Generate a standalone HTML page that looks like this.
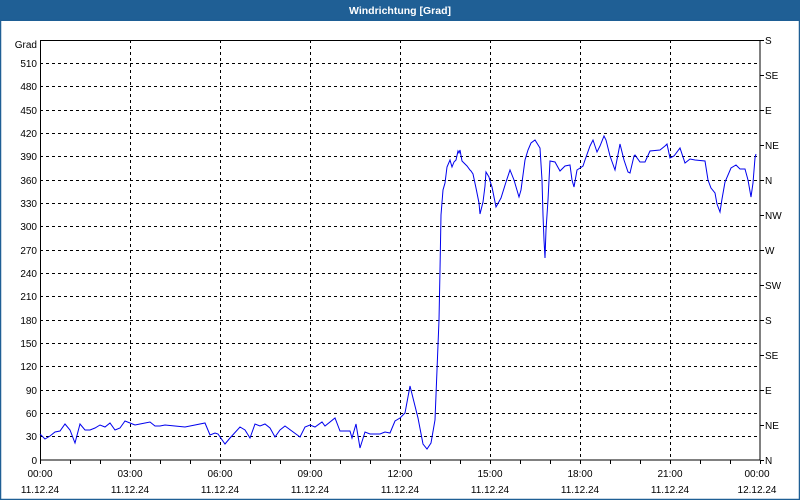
<!DOCTYPE html>
<html><head><meta charset="utf-8"><style>
html,body{margin:0;padding:0;width:800px;height:500px;overflow:hidden;background:#fff;font-family:"Liberation Sans",sans-serif}
</style></head><body>
<svg width="800" height="500" xmlns="http://www.w3.org/2000/svg" font-family="Liberation Sans, sans-serif" font-size="10">
<rect x="0" y="0" width="800" height="500" fill="#fff"/>
<rect x="0" y="0" width="800" height="21" fill="#1f5f95"/>
<rect x="0.5" y="20" width="799" height="479.5" fill="none" stroke="#1f5f95" stroke-width="1.5"/>
<text x="400" y="14" text-anchor="middle" fill="#fff" font-weight="bold" font-size="10.5">Windrichtung [Grad]</text>
<g stroke="#000" stroke-width="1" stroke-dasharray="3,3" fill="none">
<path d="M40 63.5H760M40 86.5H760M40 110.5H760M40 133.5H760M40 156.5H760M40 180.5H760M40 203.5H760M40 226.5H760M40 250.5H760M40 273.5H760M40 296.5H760M40 320.5H760M40 343.5H760M40 366.5H760M40 390.5H760M40 413.5H760M40 436.5H760"/>
<path d="M130.5 40V460M220.5 40V460M310.5 40V460M400.5 40V460M490.5 40V460M580.5 40V460M670.5 40V460"/>
</g>
<rect x="40.5" y="40.5" width="719.5" height="419.5" fill="none" stroke="#000"/>
<g stroke="#000"><path d="M40.5 460v4M70.5 460v4M100.5 460v4M130.5 460v4M160.5 460v4M190.5 460v4M220.5 460v4M250.5 460v4M280.5 460v4M310.5 460v4M340.5 460v4M370.5 460v4M400.5 460v4M430.5 460v4M460.5 460v4M490.5 460v4M520.5 460v4M550.5 460v4M580.5 460v4M610.5 460v4M640.5 460v4M670.5 460v4M700.5 460v4M730.5 460v4M760.5 460v4"/>
<path d="M760 40.5h4M760 75.5h4M760 110.5h4M760 145.5h4M760 180.5h4M760 215.5h4M760 250.5h4M760 285.5h4M760 320.5h4M760 355.5h4M760 390.5h4M760 425.5h4M760 460.5h4"/></g>
<g text-anchor="end">
<text x="37" y="48">Grad</text>
<text x="37" y="67">510</text><text x="37" y="90">480</text><text x="37" y="114">450</text><text x="37" y="137">420</text><text x="37" y="160">390</text><text x="37" y="184">360</text><text x="37" y="207">330</text><text x="37" y="230">300</text><text x="37" y="254">270</text><text x="37" y="277">240</text><text x="37" y="300">210</text><text x="37" y="324">180</text><text x="37" y="347">150</text><text x="37" y="370">120</text><text x="37" y="394">90</text><text x="37" y="417">60</text><text x="37" y="440">30</text><text x="37" y="464">0</text>
</g>
<g>
<text x="765" y="44">S</text><text x="765" y="79">SE</text><text x="765" y="114">E</text><text x="765" y="149">NE</text><text x="765" y="184">N</text><text x="765" y="219">NW</text><text x="765" y="254">W</text><text x="765" y="289">SW</text><text x="765" y="324">S</text><text x="765" y="359">SE</text><text x="765" y="394">E</text><text x="765" y="429">NE</text><text x="765" y="464">N</text>
</g>
<g text-anchor="middle">
<text x="40" y="477">00:00</text><text x="130" y="477">03:00</text><text x="220" y="477">06:00</text><text x="310" y="477">09:00</text><text x="400" y="477">12:00</text><text x="490" y="477">15:00</text><text x="580" y="477">18:00</text><text x="670" y="477">21:00</text><text x="757" y="477">00:00</text>
<text x="40" y="493">11.12.24</text><text x="130" y="493">11.12.24</text><text x="220" y="493">11.12.24</text><text x="310" y="493">11.12.24</text><text x="400" y="493">11.12.24</text><text x="490" y="493">11.12.24</text><text x="580" y="493">11.12.24</text><text x="670" y="493">11.12.24</text><text x="757" y="493">12.12.24</text>
</g>
<polyline fill="none" stroke="#0000ee" stroke-width="1" points="40,434 45,439 50,436 55,432 60,431 65,424 70,430 75,443 80,424 85,430 90,430 95,428 100,425 105,427 110,423 115,430 120,428 125,421 130,423 135,425 140,424 150,422 155,426 160,426 165,425 175,426 185,427 195,425 205,423 210,435 215,433 218,434 225,444 230,438 240,427 245,430 250,438 255,424 260,426 265,424 270,428 275,437 280,430 285,426 300,437 305,427 310,425 315,427 322,422 325,426 335,418 340,431 350,431 352,438 356,424 360,448 365,432 370,434 380,434 385,432 390,433 395,421 400,418 405,413 410,386 413,398 418,418 423,444 427,449 431,443 435,420 437,370 439,320 440,270 441,215 443,190 445,183 447,167 450,160 452,167 454,162 456,160 458,151 459,153 460,150 462,161 467,166 470,170 471,171 473,174 476,188 479,203 480,214 483,202 485,186 486,172 489,177 490,181 492,187 496,207 501,198 506,182 510,170 514,180 519,197 521,190 525,160 528,150 531,143 535,140 540,148 542,180 543,215 544,240 545,258 546,230 548,200 550,161 555,162 560,171 565,166 570,165 572,180 574,187 577,170 583,166 585,160 590,146 593,140 597,152 600,146 604,136 606,140 610,156 615,170 620,144 624,160 628,172 630,173 634,156 635,155 640,162 645,162 650,151 660,150 665,146 667,144 670,158 674,156 680,148 685,163 690,159 695,160 705,161 708,180 711,188 715,193 717,204 720,212 722,199 725,182 731,168 736,165 740,169 745,169 748,180 751,197 753,183 755,158 756,154"/>
</svg>
</body></html>
